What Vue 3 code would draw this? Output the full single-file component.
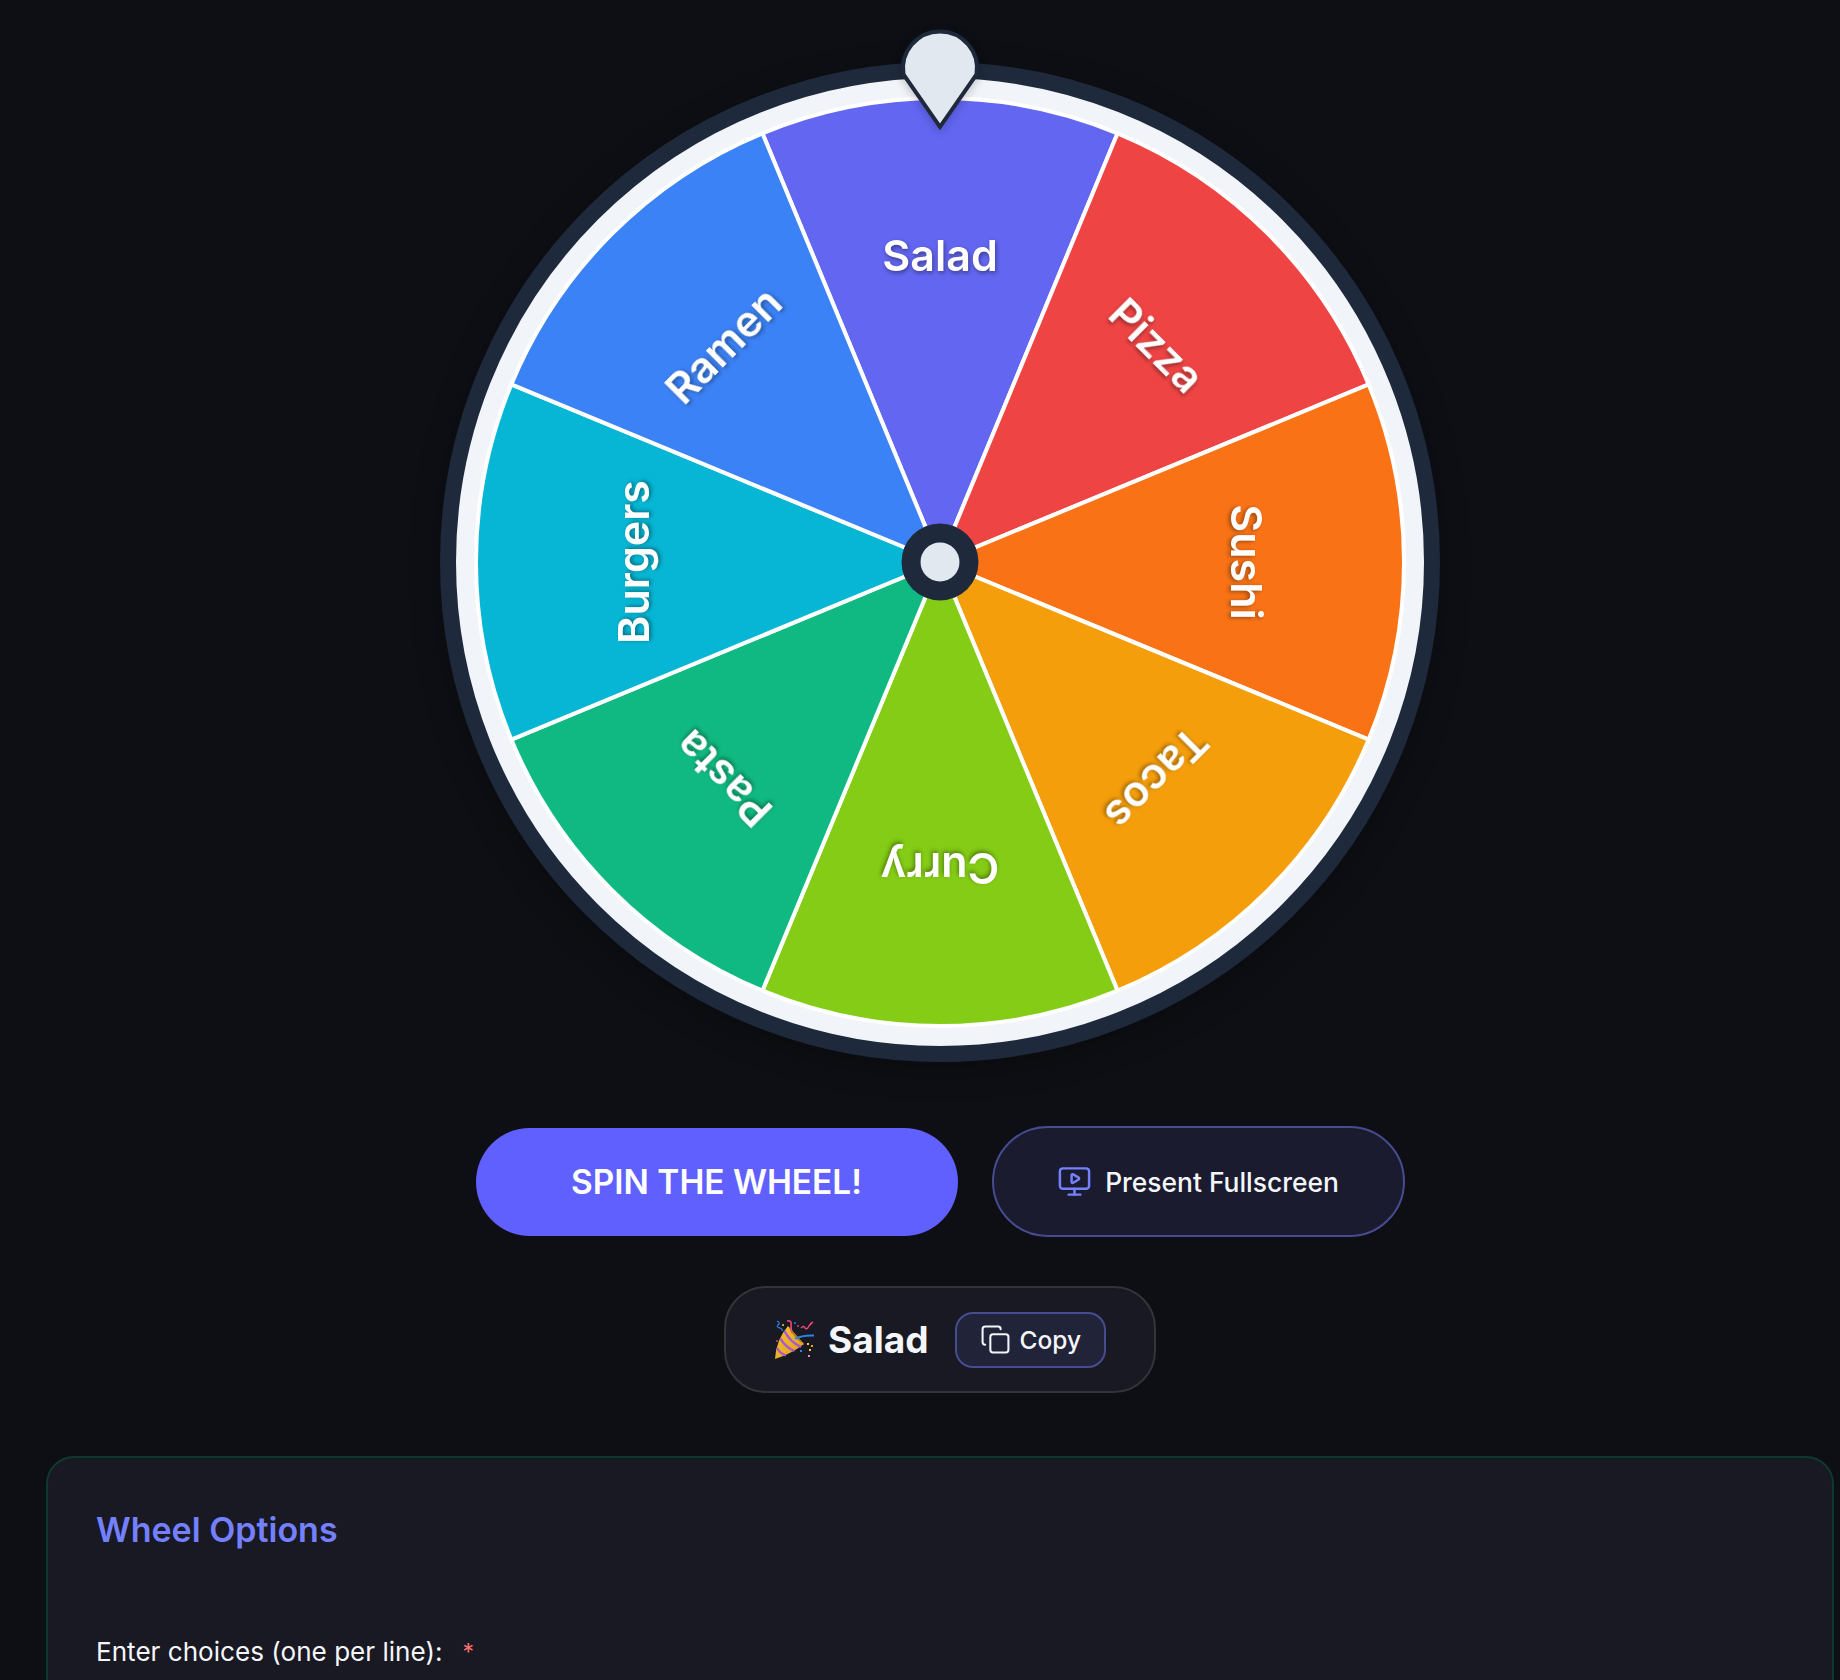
<script setup>
const colors = [
  ['Salad', '#6366f1'],
  ['Pizza', '#ef4444'],
  ['Sushi', '#f97316'],
  ['Tacos', '#f59e0b'],
  ['Curry', '#84cc16'],
  ['Pasta', '#10b981'],
  ['Burgers', '#06b6d4'],
  ['Ramen', '#3b82f6'],
]
const R = 464
const pt = (deg) => {
  const a = (deg * Math.PI) / 180
  return `${(R * Math.cos(a)).toFixed(2)} ${(R * Math.sin(a)).toFixed(2)}`
}
const slices = colors.map(([label, fill], i) => ({
  label,
  fill,
  rot: i * 45,
  d: `M0 0 L${pt(-112.5 + i * 45)} A${R} ${R} 0 0 1 ${pt(-67.5 + i * 45)} Z`,
}))
</script>

<template>
  <div class="page">
    <div class="wheel-wrap">
      <svg class="wheel" viewBox="-500 -500 1000 1000" width="1000" height="1000">
        <circle r="492" fill="#f1f5f9" stroke="#1e293b" stroke-width="16" />
        <g v-for="s in slices" :key="s.label">
          <path :d="s.d" :fill="s.fill" stroke="#fff" stroke-width="4" stroke-linejoin="round" />
          <text class="slice-label" :transform="`rotate(${s.rot})`" x="0" y="-291" text-anchor="middle">{{ s.label }}</text>
        </g>
        <circle r="38.5" fill="#1e293b" />
        <circle r="19.5" fill="#e2e8f0" />
      </svg>
      <svg class="pointer" viewBox="0 0 84 110" width="84" height="110">
        <path d="M42 98.8 L5.5 46.5 A37 37 0 1 1 78.5 46.5 Z" fill="#e2e8f0" stroke="#1e293b" stroke-width="4" stroke-linejoin="miter" />
      </svg>
    </div>

    <div class="actions">
      <button class="spin" type="button">SPIN THE WHEEL!</button>
      <button class="present" type="button">
        <svg viewBox="0 0 24 24" width="35" height="35" fill="none" stroke="#7580ff" stroke-width="1.7" stroke-linecap="round" stroke-linejoin="round">
          <path d="M10 7.75a.75.75 0 0 1 1.142-.638l3.664 2.249a.75.75 0 0 1 0 1.278l-3.664 2.25a.75.75 0 0 1-1.142-.64z" />
          <path d="M12 17v4" />
          <path d="M8 21h8" />
          <rect x="2" y="3" width="20" height="14" rx="2" />
        </svg>
        <span>Present Fullscreen</span>
      </button>
    </div>

    <div class="result">
      <svg class="popper" viewBox="0 0 40 40" width="40" height="40" fill="none">
        <defs>
          <linearGradient id="cone" x1="0" y1="0" x2="1" y2="1">
            <stop offset="0" stop-color="#f7c62f" />
            <stop offset="1" stop-color="#e09a1a" />
          </linearGradient>
        </defs>
        <path d="M14 6 L30 24 Q17 34 1 39 Q2 20 14 6Z" fill="url(#cone)" />
        <path d="M14 6 L30 24 Q21 20 14 6Z" fill="#a9781c" />
        <path d="M10.5 11 Q16 22 27 27" stroke="#a855d8" stroke-width="2.4" />
        <path d="M6.5 18.5 Q11 27 20.5 31" stroke="#a855d8" stroke-width="2.4" />
        <path d="M3 28 Q6 33.5 12 35.5" stroke="#a855d8" stroke-width="2.2" />
        <path d="M21 19 Q28 15 40 15.5" stroke="#2f80ed" stroke-width="2" />
        <path d="M3 1 Q7 3 4 5 Q2 7 6 8 Q9 9 8 11" stroke="#2f80ed" stroke-width="1.3" />
        <path d="M13 1 Q18 0 17 5 Q17 9 18 13" stroke="#f0467a" stroke-width="1.6" />
        <path d="M27 8 Q30 5 31 8 Q33 10 35 6 Q37 3 39 2" stroke="#f0467a" stroke-width="1.4" />
        <circle cx="9" cy="5" r="1" fill="#f7c948" />
        <circle cx="21" cy="3" r="1" fill="#2f80ed" />
        <circle cx="24" cy="6" r="0.9" fill="#f0467a" />
        <circle cx="3" cy="21" r="0.9" fill="#f0467a" />
        <rect x="37" y="25" width="2" height="2" fill="#f59e0b" />
        <rect x="33" y="23" width="2" height="2" fill="#f7c948" />
        <rect x="35" y="29" width="2" height="2" fill="#f7c948" />
        <rect x="26" y="30" width="2" height="2" fill="#2f80ed" />
        <rect x="34" y="35" width="2" height="2" fill="#f08fb0" />
      </svg>
      <strong class="winner">Salad</strong>
      <button class="copy" type="button">
        <svg viewBox="0 0 24 24" width="31" height="31" fill="none" stroke="#f1f5f9" stroke-width="1.6" stroke-linecap="round" stroke-linejoin="round">
          <rect x="8" y="8" width="14" height="14" rx="2" />
          <path d="M4 16c-1.1 0-2-.9-2-2V4c0-1.1.9-2 2-2h10c1.1 0 2 .9 2 2" />
        </svg>
        <span>Copy</span>
      </button>
    </div>

    <section class="card">
      <h2 class="card-title">Wheel Options</h2>
      <div class="field-label">
        <span>Enter choices (one per line):</span>
        <span class="req">*</span>
      </div>
    </section>
  </div>
</template>

<style>
html, body { margin: 0; background: #0d0f14; overflow: hidden; }
</style>

<style scoped>
.page {
  height: 1680px;
  overflow: hidden;
  box-sizing: border-box;
  padding: 62px 6px 0 46px;
  display: flex;
  flex-direction: column;
  align-items: center;
  background: #0d0f14;
  font-family: Inter, "Liberation Sans", sans-serif;
  color: #f5f6fa;
}
.wheel-wrap {
  position: relative;
  width: 1000px;
  height: 1000px;
  border-radius: 50%;
  box-shadow: 0 8px 30px rgba(0, 0, 0, 0.25);
  flex: none;
}
.wheel { display: block; }
.slice-label {
  font-size: 43px;
  font-weight: 600;
  fill: #fff;
  filter: drop-shadow(1px 2px 2px rgba(0, 0, 0, 0.4));
}
.pointer {
  position: absolute;
  left: 458px;
  top: -34px;
  filter: drop-shadow(0 3px 5px rgba(0, 0, 0, 0.2));
}
.actions {
  display: flex;
  align-items: center;
  gap: 34px;
  margin-top: 64px;
  flex: none;
}
button {
  font-family: inherit;
  color: inherit;
  cursor: pointer;
}
.spin {
  width: 482px;
  height: 108px;
  border: 0;
  border-radius: 54px;
  background: #6060ff;
  color: #fff;
  font-size: 33.4px;
  font-weight: 600;
}
.present {
  width: 413px;
  height: 111px;
  box-sizing: border-box;
  border: 2px solid #474c90;
  border-radius: 56px;
  background: #1a1b2e;
  display: flex;
  align-items: center;
  justify-content: center;
  gap: 13px;
  font-size: 26.4px;
  font-weight: 500;
}
.result {
  margin-top: 49px;
  height: 107px;
  box-sizing: border-box;
  border: 2px solid #333438;
  border-radius: 42px;
  background: #181922;
  padding: 0 48px;
  display: flex;
  align-items: center;
  flex: none;
}
.popper { flex: none; margin-right: 14px; }
.winner {
  font-size: 37px;
  font-weight: 700;
  margin-right: 26px;
}
.copy {
  height: 56px;
  box-sizing: border-box;
  padding: 0 23px;
  border: 2px solid #474c90;
  border-radius: 18px;
  background: #212338;
  display: flex;
  align-items: center;
  gap: 9px;
  font-size: 24.5px;
  font-weight: 500;
}
.card {
  margin-top: 63px;
  width: 100%;
  box-sizing: border-box;
  flex: none;
  height: 400px;
  padding: 48px 48px;
  border: 2px solid #0e3a2e;
  border-radius: 28px;
  background: #181922;
}
.card-title {
  margin: 0;
  font-size: 34px;
  font-weight: 600;
  line-height: 48px;
  color: #7480ff;
}
.field-label {
  margin-top: 80px;
  font-size: 26.1px;
  line-height: 36px;
  display: flex;
  gap: 20px;
}
.req { color: #f87171; font-size: 23px; }
</style>
